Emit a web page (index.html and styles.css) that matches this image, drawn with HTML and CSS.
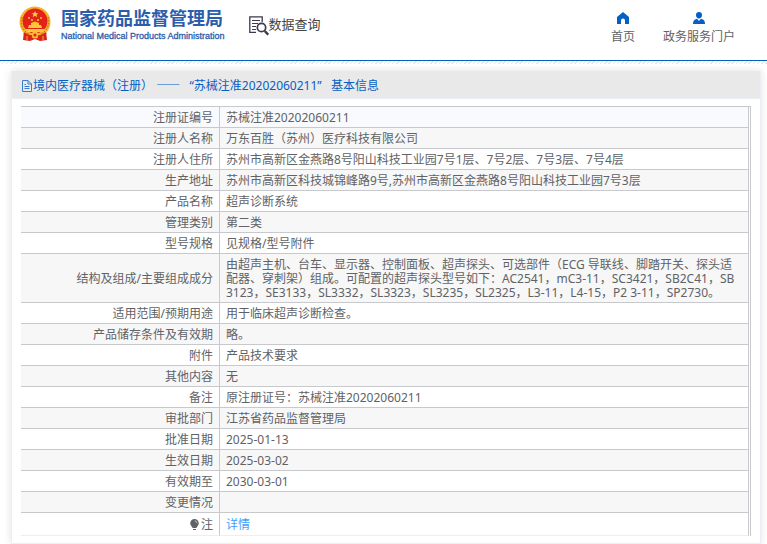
FILE: index.html
```html
<!DOCTYPE html>
<html lang="zh-CN">
<head>
<meta charset="utf-8">
<title>国家药品监督管理局 数据查询</title>
<link rel="stylesheet" href="styles.css">
</head>
<body>
<header class="site-header">
  <a class="brand" href="#">
    <svg class="emblem" viewBox="0 0 32 36" aria-hidden="true">
      <path fill="#d9231c" d="M5 25l-1 9 7 1 5-2 5 2 7-1-1-9z"/>
      <circle cx="16" cy="16" r="15.500" fill="#f3b52c"/>
      <circle cx="16" cy="15" r="12.500" fill="#e32219"/>
      <path fill="#ffd33f" d="M16 5l1 2.300h2.500l-2 1.500.8 2.500-2.300-1.500-2.300 1.500.8-2.500-2-1.500H15z"/>
      <g fill="#ffc63a"><circle cx="10" cy="12" r="1"/><circle cx="22" cy="12" r="1"/><circle cx="13" cy="14" r="1"/><circle cx="19" cy="14" r="1"/>
      <path d="M12 17l4-1.500 4 1.500v2h2l1 3H9l1-3h2zM6 23h20l-2 3H8z"/></g>
      <path fill="none" stroke="#c9501c" stroke-dasharray="1.500 1.500" d="M3 11a14 14 0 0 0 7 17M29 11a14 14 0 0 1-7 17"/>
      <circle cx="16" cy="29" r="3.500" fill="#f6bd31"/>
      <circle cx="16" cy="29" r="1.500" fill="#d9231c"/>
      <path fill="none" stroke="#d9231c" stroke-width="2" d="M5 27q5 4 8 3M27 27q-5 4-8 3"/>
      <path fill="none" stroke="#f3b52c" d="M8 30v4M24 30v4"/>
    </svg>
    <span class="brand-text">
      <span class="brand-cn">国家药品监督管理局</span>
      <span class="brand-en">National Medical Products Administration</span>
    </span>
  </a>
  <a class="query" href="#">
    <svg class="query-icon" viewBox="0 0 20 20" aria-hidden="true">
      <g fill="none" stroke="#3a3a4c">
        <path stroke-width="1.300" d="M7 16.300H.8V.8h12.400V6"/>
        <path d="M3 4.500h8M3 7.500h6M3 10.500h4M3 13.500h4"/>
        <circle cx="12.500" cy="11.500" r="4.200" stroke-width="1.700"/>
        <path stroke-width="2.400" d="M15.700 15l3.500 3.700"/>
      </g>
    </svg>
    <span>数据查询</span>
  </a>
  <nav class="links">
    <a href="#">
      <svg viewBox="0 0 12 12" aria-hidden="true"><path fill="#0560c4" d="M6 0l6 5v7H8V8.500a2 2 0 0 0-4 0V12H0V5z"/></svg>
      <span>首页</span>
    </a>
    <a href="#">
      <svg viewBox="0 0 12 12" aria-hidden="true"><path fill="#0560c4" d="M6 0a3 3 0 0 1 3 3c0 2-1.200 3.500-3 3.500S3 5 3 3a3 3 0 0 1 3-3zM0 12c0-3 1-4.500 4-5.200L6 9l2-2.200c3 .7 4 2.200 4 5.200z"/></svg>
      <span>政务服务门户</span>
    </a>
  </nav>
</header>
<main class="card">
  <h1 class="card-title">
    <svg viewBox="0 0 10 12" aria-hidden="true"><path fill="none" stroke="#3c7cd0" d="M.5.500H6L9.500 4v7.500h-9zM6 .5V4h3.500M2.500 4.500H4M2.500 6.500h5M2.500 8.500h5"/></svg>
    <span>境内医疗器械（注册） <span class="dash">——</span>&nbsp;&nbsp; “苏械注准20202060211”&nbsp;&nbsp; 基本信息</span>
  </h1>
  <div class="table-frame">
    <table>
      <tbody>
        <tr><th scope="row">注册证编号</th><td>苏械注准20202060211</td></tr>
        <tr><th scope="row">注册人名称</th><td>万东百胜（苏州）医疗科技有限公司</td></tr>
        <tr><th scope="row">注册人住所</th><td>苏州市高新区金燕路8号阳山科技工业园7号1层、7号2层、7号3层、7号4层</td></tr>
        <tr><th scope="row">生产地址</th><td>苏州市高新区科技城锦峰路9号,苏州市高新区金燕路8号阳山科技工业园7号3层</td></tr>
        <tr><th scope="row">产品名称</th><td>超声诊断系统</td></tr>
        <tr><th scope="row">管理类别</th><td>第二类</td></tr>
        <tr><th scope="row">型号规格</th><td>见规格/型号附件</td></tr>
        <tr class="tall"><th scope="row">结构及组成/主要组成成分</th><td>由超声主机、台车、显示器、控制面板、超声探头、可选部件（ECG 导联线、脚踏开关、探头适<br>配器、穿刺架）组成。可配置的超声探头型号如下：AC2541，mC3-11，SC3421，SB2C41，SB<br>3123，SE3133，SL3332，SL3323，SL3235，SL2325，L3-11，L4-15，P2 3-11，SP2730。</td></tr>
        <tr><th scope="row">适用范围/预期用途</th><td>用于临床超声诊断检查。</td></tr>
        <tr><th scope="row">产品储存条件及有效期</th><td>略。</td></tr>
        <tr><th scope="row">附件</th><td>产品技术要求</td></tr>
        <tr><th scope="row">其他内容</th><td>无</td></tr>
        <tr><th scope="row">备注</th><td>原注册证号：苏械注准20202060211</td></tr>
        <tr><th scope="row">审批部门</th><td>江苏省药品监督管理局</td></tr>
        <tr><th scope="row">批准日期</th><td>2025-01-13</td></tr>
        <tr><th scope="row">生效日期</th><td>2025-03-02</td></tr>
        <tr><th scope="row">有效期至</th><td>2030-03-01</td></tr>
        <tr><th scope="row">变更情况</th><td></td></tr>
        <tr class="note"><th scope="row"><svg class="bulb" viewBox="0 0 9 12" aria-hidden="true"><path fill="#606266" d="M4.500 0A4.300 4.300 0 0 1 8.800 4.300C8.800 6.500 7 7.500 6.300 9H2.700C2 7.500.2 6.500.2 4.300A4.300 4.300 0 0 1 4.500 0zM3 10h3v1H3z"/><path fill="none" stroke="#ddd" stroke-width=".8" d="M4.800 1.800q2 .4 2.300 2.400"/></svg>注</th><td><a href="#">详情</a></td></tr>
      </tbody>
    </table>
  </div>
</main>
</body>
</html>
```

FILE: styles.css
```css
* {
  box-sizing: border-box;
}

body {
  margin: 0;
  background: #fff;
  color: #606266;
  font: 12px/14px "Noto Sans", "Noto Sans CJK SC", sans-serif;
}

a {
  color: inherit;
  text-decoration: none;
}

svg {
  display: block;
}

.site-header {
  position: relative;
  display: flex;
  align-items: flex-start;
  height: 61px;
  padding: 6px 32px 0 19px;
  border-bottom: 1px solid #0560c4;
}

.site-header::after {
  content: "";
  position: absolute;
  top: 100%;
  left: 0;
  right: 0;
  margin-top: 1px;
  height: 3px;
  background: repeating-linear-gradient(135deg, #e6e6e6 0 1px, #fff 1px 3px);
}

.brand {
  display: flex;
  gap: 10px;
  color: #2c5dab;
}

.emblem {
  width: 32px;
  height: 36px;
}

.brand-text {
  display: flex;
  flex-direction: column;
  white-space: nowrap;
}

.brand-cn {
  font-size: 18px;
  font-weight: 700;
  line-height: 24px;
}

.brand-en {
  font: 9px/12px "Liberation Sans", sans-serif;
  -webkit-text-stroke: 0.3px #2c5dab;
}

.query {
  display: flex;
  margin: 8px 0 0 24px;
  color: #444;
  font-size: 13px;
  line-height: 20px;
  white-space: nowrap;
}

.query-icon {
  width: 20px;
  height: 20px;
  margin-top: 2px;
}

.links {
  display: flex;
  gap: 28px;
  margin-left: auto;
  padding-top: 6px;
}

.links a {
  display: flex;
  flex-direction: column;
  align-items: center;
  gap: 4px;
  line-height: 18px;
}

.links svg {
  width: 12px;
  height: 12px;
}

.card {
  margin: 10px 6px 0 11px;
  padding-bottom: 7px;
  border: 1px solid #ebeef5;
  border-top: 0;
  box-shadow: 0 0 8px rgba(0, 0, 0, 0.12);
}

.card-title {
  display: flex;
  align-items: center;
  height: 28px;
  margin: 0;
  padding: 2px 10px 0;
  border-bottom: 1px solid #ebeef5;
  background: #e9e9e9;
  color: #0560c4;
  font-size: 12px;
  font-weight: 400;
}

.card-title svg {
  width: 10px;
  height: 12px;
  margin-right: 1px;
}

.dash {
  font-family: "Noto Sans CJK SC", sans-serif;
}

.table-frame {
  margin: 7px 9px 0;
  padding-right: 1px;
  border-top: 1px solid #c8c9cc;
  border-right: 1px solid #c8c9cc;
}

table {
  width: 100%;
  border-collapse: separate;
  border-spacing: 0;
  table-layout: fixed;
}

th,
td {
  height: 21px;
  padding: 2px 6px 0;
  border-right: 1px solid #c8c9cc;
  border-bottom: 1px solid #c8c9cc;
  font-weight: 400;
}

th {
  width: 199px;
  text-align: right;
}

td {
  text-align: left;
  white-space: nowrap;
}

tr:nth-child(even) {
  background: #f7f7f7;
}

tr:first-child {
  background: #f8fafd;
}

.tall th,
.tall td {
  height: 49px;
}

.note th,
.note td {
  height: 23px;
  border-bottom-color: #ebeef5;
}

.note a {
  color: #409eff;
}

.bulb {
  display: inline-block;
  width: 9px;
  height: 12px;
  margin-right: 2px;
  vertical-align: -2px;
}
```
